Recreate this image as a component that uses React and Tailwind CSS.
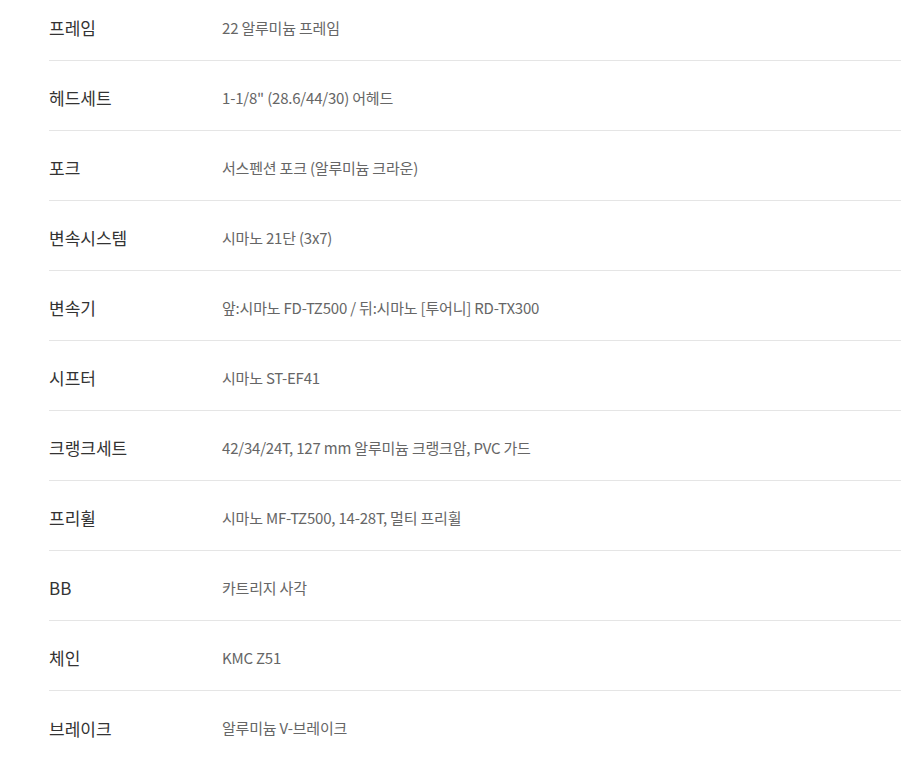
import React from 'react';

const specs = [
  ['프레임', '22 알루미늄 프레임'],
  ['헤드세트', '1-1/8" (28.6/44/30) 어헤드'],
  ['포크', '서스펜션 포크 (알루미늄 크라운)'],
  ['변속시스템', '시마노 21단 (3x7)'],
  ['변속기', '앞:시마노 FD-TZ500 / 뒤:시마노 [투어니] RD-TX300'],
  ['시프터', '시마노 ST-EF41'],
  ['크랭크세트', '42/34/24T, 127 mm 알루미늄 크랭크암, PVC 가드'],
  ['프리휠', '시마노 MF-TZ500, 14-28T, 멀티 프리휠'],
  ['BB', '카트리지 사각'],
  ['체인', 'KMC Z51'],
  ['브레이크', '알루미늄 V-브레이크'],
];

const App = () => {
  return (
    <div className="min-h-screen bg-white overflow-hidden font-['Noto_Sans_CJK_KR','Noto_Sans',sans-serif]">
      {/* spec table */}
      <ul className="ml-[49px] -mt-[9px] divide-y divide-[#e5e5e5]">
        {specs.map(([label, value]) => (
          <li key={label} className="flex items-center h-[70px] pt-[5px]">
            <span className="w-[173px] shrink-0 text-[17px] text-[#333]">{label}</span>
            <span className="text-[15px] text-[#666] tracking-[-0.2px]">{value}</span>
          </li>
        ))}
      </ul>
    </div>
  );
};

export default App;
